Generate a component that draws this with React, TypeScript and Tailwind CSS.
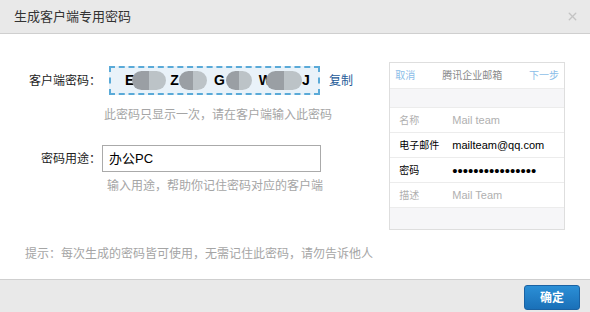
import { X } from 'lucide-react'

const font = { fontFamily: '"Liberation Sans", "Noto Sans CJK SC", sans-serif' }

function Blob({ w }: { w: string }) {
  return (
    <span className={`flex h-[19px] ${w} shrink-0 overflow-hidden rounded-full blur-[0.4px]`}>
      <span className="h-full w-1/2 bg-[#9a9fa4]" />
      <span className="h-full w-1/2 bg-[#bcc3c7]" />
    </span>
  )
}

export default function App() {
  const rows = [
    { label: '名称', value: 'Mail team', dim: true },
    { label: '电子邮件', value: 'mailteam@qq.com', dim: false },
    { label: '密码', value: '••••••••••••••••', dim: false, dots: true },
    { label: '描述', value: 'Mail Team', dim: true },
  ]

  return (
    <div className="flex h-[312px] w-[590px] flex-col bg-white text-[12px] text-[#222]" style={font}>
      {/* header */}
      <div className="flex h-[34px] items-center justify-between border-b border-[#cfcfcf] bg-[#e9e9e9] pl-[14px] pr-[11px]">
        <span className="text-[13px] text-[#333]">生成客户端专用密码</span>
        <X className="h-[13px] w-[13px] text-[#c4c4c4]" strokeWidth={2.5} />
      </div>

      {/* body */}
      <div className="flex flex-1 flex-col px-[25px] pt-[28px]">
        <div className="flex">
          <div className="flex w-[365px] flex-col pt-[4px]">
            <div className="flex h-[29px] items-center">
              <span className="w-[76px] text-right">客户端密码：</span>
              <div className="ml-[8px] flex h-[29px] w-[211px] shrink-0 items-center border-2 border-dashed border-[#5aaad8] bg-[#e9f2f9] pl-[14px] text-[14px] font-bold text-black">
                <span className="shrink-0">E</span>
                <span className="-ml-[2px] shrink-0"><Blob w="w-[34px]" /></span>
                <span className="ml-[4px] shrink-0">Z</span>
                <span className="shrink-0"><Blob w="w-[28px]" /></span>
                <span className="ml-[7px] shrink-0">G</span>
                <span className="ml-[1px] shrink-0"><Blob w="w-[26px]" /></span>
                <span className="ml-[7px] shrink-0">W</span>
                <span className="-ml-[6px] shrink-0"><Blob w="w-[36px]" /></span>
                <span className="shrink-0">J</span>
              </div>
              <span className="ml-[9px] text-[#245a97]">复制</span>
            </div>
            <div className="ml-[79px] mt-[13px] leading-[14px] text-[#a5a5a5]">此密码只显示一次，请在客户端输入此密码</div>

            <div className="mt-[23px] flex h-[27px] items-center">
              <span className="w-[76px] text-right">密码用途：</span>
              <div className="ml-[1px] flex h-[27px] w-[219px] items-center border border-[#aaaaaa] pl-[6px] text-[13px] text-black">办公PC</div>
            </div>
            <div className="ml-[82px] mt-[7px] leading-[14px] text-[#a5a5a5]">输入用途，帮助你记住密码对应的客户端</div>
          </div>

          {/* phone preview */}
          <div className="flex h-[168px] w-[176px] flex-col border border-[#dedede] bg-white">
            <div className="flex h-[25px] items-center justify-between px-[5px] text-[10px]">
              <span className="text-[#8bbde8]">取消</span>
              <span className="text-[#8a8a8a]">腾讯企业邮箱</span>
              <span className="text-[#8bbde8]">下一步</span>
            </div>
            <div className="h-[20px] border-y border-[#ececec] bg-[#f6f6f8]" />
            {rows.map((r) => (
              <div key={r.label} className="flex h-[25px] items-center border-b border-[#ececec] pl-[9px]">
                <span className={`w-[53px] text-[10px] ${r.dim ? 'text-[#b0b0b0]' : 'text-black'}`}>{r.label}</span>
                <span className={`${r.dots ? 'text-[15px] leading-none' : 'text-[11px]'} ${r.dim ? 'text-[#b0b0b0]' : 'text-black'}`}>{r.value}</span>
              </div>
            ))}
            <div className="flex-1 bg-[#f6f6f8]" />
          </div>
        </div>

        <div className="mt-[17px] leading-[14px] text-[#a5a5a5]">提示：每次生成的密码皆可使用，无需记住此密码，请勿告诉他人</div>
      </div>

      {/* footer */}
      <div className="flex h-[33px] items-start justify-end border-t border-[#cfcfcf] bg-[#e9e9e9] pr-[10px] pt-[5px]">
        <button className="h-[25px] w-[56px] rounded-[3px] border border-[#1a62a3] bg-gradient-to-b from-[#2b8fd6] to-[#1a70b8] text-[12px] font-bold text-white">确定</button>
      </div>
    </div>
  )
}
